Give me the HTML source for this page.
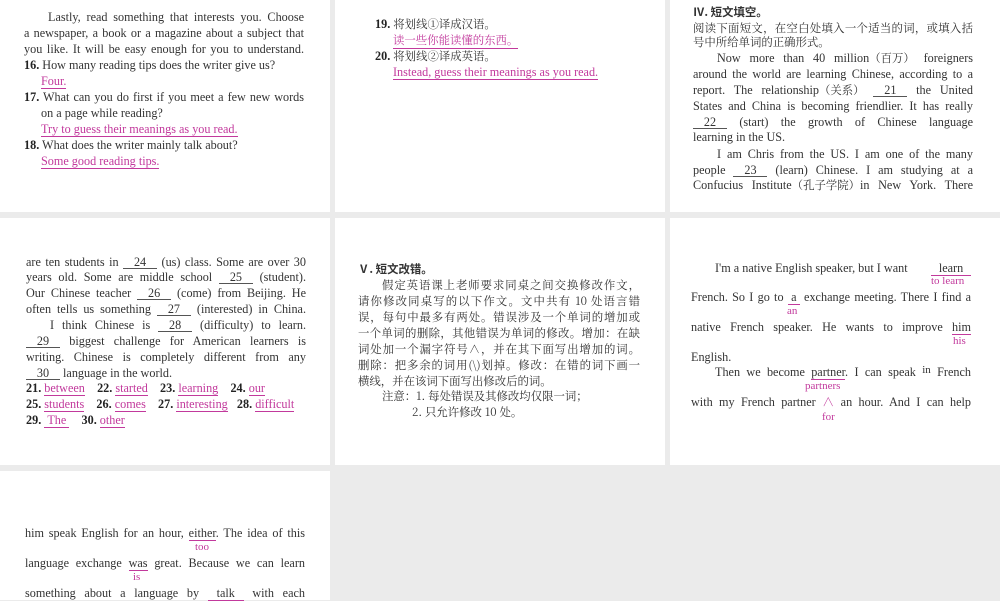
<!DOCTYPE html>
<html><head><meta charset="utf-8">
<style>
*{margin:0;padding:0;box-sizing:border-box}
body{width:1000px;height:600px;background:#ebebeb;position:relative;overflow:hidden;font-family:"Liberation Serif","Noto Serif CJK SC",serif;font-size:12.2px;color:#333}
.p{position:absolute;background:#fff}
.l{position:absolute;white-space:nowrap;line-height:14px;height:14px}
.j{text-align:justify;text-align-last:justify}
.m{color:#c2399c}
.u{border-bottom:1px solid #c2399c}
.b{display:inline-block;border-bottom:1px solid #555;text-align:center;text-align-last:center;line-height:12px}
.c{text-align:center;text-align-last:center}
.k{font-weight:bold;color:#222}
.cn{font-family:"Noto Serif CJK SC",serif;font-size:11.4px}
.ib{display:inline-block}
.h{font-family:"Noto Sans CJK SC",sans-serif;font-weight:bold;font-size:11.4px}
.s{font-size:11px}
</style></head><body>
<div class="p" style="left:0;top:0;width:330px;height:212px"></div>
<div class="p" style="left:335px;top:0;width:330px;height:212px"></div>
<div class="p" style="left:670px;top:0;width:330px;height:212px"></div>
<div class="p" style="left:0;top:218px;width:330px;height:247px"></div>
<div class="p" style="left:335px;top:218px;width:330px;height:247px"></div>
<div class="p" style="left:670px;top:218px;width:330px;height:247px"></div>
<div class="p" style="left:0;top:471px;width:330px;height:129px"></div>

<!-- panel 1 -->
<div class="l j" style="left:48px;top:10px;width:256px">Lastly, read something that interests you. Choose</div>
<div class="l j" style="left:24px;top:26px;width:280px">a newspaper, a book or a magazine about a subject that</div>
<div class="l j" style="left:24px;top:42px;width:280px">you like. It will be easy enough for you to understand.</div>
<div class="l" style="left:24px;top:58px"><span class="k">16.</span> How many reading tips does the writer give us?</div>
<div class="l m" style="left:41px;top:74px"><span class="u">Four.</span></div>
<div class="l j" style="left:24px;top:90px;width:280px"><span class="k">17.</span> What can you do first if you meet a few new words</div>
<div class="l" style="left:41px;top:106px">on a page while reading?</div>
<div class="l m" style="left:41px;top:122px"><span class="u">Try to guess their meanings as you read.</span></div>
<div class="l" style="left:24px;top:138px"><span class="k">18.</span> What does the writer mainly talk about?</div>
<div class="l m" style="left:41px;top:154px"><span class="u">Some good reading tips.</span></div>

<!-- panel 2 -->
<div class="l" style="left:375px;top:17px"><span class="k">19.</span> <span class="cn">将划线①译成汉语。</span></div>
<div class="l m" style="left:393px;top:33px"><span class="u cn">读一些你能读懂的东西。</span></div>
<div class="l" style="left:375px;top:49px"><span class="k">20.</span> <span class="cn">将划线②译成英语。</span></div>
<div class="l m" style="left:393px;top:65px"><span class="u">Instead, guess their meanings as you read.</span></div>

<!-- panel 3 -->
<div class="l h" style="left:693px;top:5px">Ⅳ. 短文填空。</div>
<div class="l j cn" style="left:693px;top:21px;width:280px">阅读下面短文，在空白处填入一个适当的词，或填入括</div>
<div class="l cn" style="left:693px;top:35px">号中所给单词的正确形式。</div>
<div class="l j" style="left:717px;top:51px;width:256px">Now more than 40 million<span class="cn ib">（百万）</span> foreigners</div>
<div class="l j" style="left:693px;top:67px;width:280px">around the world are learning Chinese, according to a</div>
<div class="l j" style="left:693px;top:83px;width:280px">report. The relationship<span class="cn ib">（关系）</span> <span class="b" style="width:34px">21</span> the United</div>
<div class="l j" style="left:693px;top:99px;width:280px">States and China is becoming friendlier. It has really</div>
<div class="l j" style="left:693px;top:115px;width:280px"><span class="b" style="width:34px">22</span> (start) the growth of Chinese language</div>
<div class="l" style="left:693px;top:130px">learning in the US.</div>
<div class="l j" style="left:717px;top:147px;width:256px">I am Chris from the US. I am one of the many</div>
<div class="l j" style="left:693px;top:163px;width:280px">people <span class="b" style="width:34px">23</span> (learn) Chinese. I am studying at a</div>
<div class="l j" style="left:693px;top:178px;width:280px">Confucius Institute<span class="cn ib">（孔子学院）</span>in New York. There</div>

<!-- panel 4 -->
<div class="l j" style="left:26px;top:255px;width:280px">are ten students in <span class="b" style="width:34px">24</span> (us) class. Some are over 30</div>
<div class="l j" style="left:26px;top:270px;width:280px">years old. Some are middle school <span class="b" style="width:34px">25</span> (student).</div>
<div class="l j" style="left:26px;top:286px;width:280px">Our Chinese teacher <span class="b" style="width:34px">26</span> (come) from Beijing. He</div>
<div class="l j" style="left:26px;top:302px;width:280px">often tells us something <span class="b" style="width:34px">27</span> (interested) in China.</div>
<div class="l j" style="left:50px;top:318px;width:256px">I think Chinese is <span class="b" style="width:34px">28</span> (difficulty) to learn.</div>
<div class="l j" style="left:26px;top:334px;width:280px"><span class="b" style="width:34px">29</span> biggest challenge for American learners is</div>
<div class="l j" style="left:26px;top:350px;width:280px">writing. Chinese is completely different from any</div>
<div class="l" style="left:26px;top:366px"><span class="b" style="width:34px">30</span> language in the world.</div>
<div class="l" style="left:26px;top:381px"><span class="k">21.</span> <span class="m u">between</span>&nbsp;&nbsp;&nbsp;&nbsp;<span class="k">22.</span> <span class="m u">started</span>&nbsp;&nbsp;&nbsp;&nbsp;<span class="k">23.</span> <span class="m u">learning</span>&nbsp;&nbsp;&nbsp;&nbsp;<span class="k">24.</span> <span class="m u">our</span></div>
<div class="l" style="left:26px;top:397px"><span class="k">25.</span> <span class="m u">students</span>&nbsp;&nbsp;&nbsp;&nbsp;<span class="k">26.</span> <span class="m u">comes</span>&nbsp;&nbsp;&nbsp;&nbsp;<span class="k">27.</span> <span class="m u">interesting</span>&nbsp;&nbsp;&nbsp;<span class="k">28.</span> <span class="m u">difficult</span></div>
<div class="l" style="left:26px;top:413px"><span class="k">29.</span> <span class="m u">&nbsp;The&nbsp;</span>&nbsp;&nbsp;&nbsp;&nbsp;<span class="k">30.</span> <span class="m u">other</span></div>

<!-- panel 5 -->
<div class="l h" style="left:358px;top:262px">Ⅴ. 短文改错。</div>
<div class="l j cn" style="left:382px;top:278px;width:258px">假定英语课上老师要求同桌之间交换修改作文，</div>
<div class="l j cn" style="left:358px;top:294px;width:282px">请你修改同桌写的以下作文。文中共有 10 处语言错</div>
<div class="l j cn" style="left:358px;top:310px;width:282px">误，每句中最多有两处。错误涉及一个单词的增加或</div>
<div class="l j cn" style="left:358px;top:326px;width:282px">一个单词的删除，其他错误为单词的修改。增加：在缺</div>
<div class="l j cn" style="left:358px;top:342px;width:282px">词处加一个漏字符号∧，并在其下面写出增加的词。</div>
<div class="l j cn" style="left:358px;top:358px;width:282px">删除：把多余的词用(\)划掉。修改：在错的词下画一</div>
<div class="l cn" style="left:358px;top:374px">横线，并在该词下面写出修改后的词。</div>
<div class="l cn" style="left:382px;top:389px">注意：1. 每处错误及其修改均仅限一词；</div>
<div class="l cn" style="left:412px;top:405px">2. 只允许修改 10 处。</div>

<!-- panel 6 -->
<div class="l" style="left:715px;top:261px">I'm a native English speaker, but I want</div>
<div class="l" style="left:931px;top:261px"><span class="c" style="border-bottom:1px solid #c2399c;display:inline-block;width:40px">learn</span></div>
<div class="l m s" style="left:931px;top:274px">to learn</div>
<div class="l j" style="left:691px;top:290px;width:280px">French. So I go to <span class="c" style="border-bottom:1px solid #c2399c;display:inline-block;width:12px">a</span> exchange meeting. There I find a</div>
<div class="l m s" style="left:787px;top:304px">an</div>
<div class="l j" style="left:691px;top:320px;width:280px">native French speaker. He wants to improve <span style="border-bottom:1px solid #c2399c">him</span></div>
<div class="l m s" style="left:953px;top:334px">his</div>
<div class="l" style="left:691px;top:350px">English.</div>
<div class="l j" style="left:715px;top:365px;width:256px">Then we become <span style="border-bottom:1px solid #c2399c">partner</span>. I can speak <span class="s ib" style="position:relative;top:-3px">in</span> French</div>
<div class="l m s" style="left:805px;top:379px">partners</div>
<div class="l j" style="left:691px;top:395px;width:280px">with my French partner <span class="m">∧</span> an hour. And I can help</div>
<div class="l m s" style="left:822px;top:410px">for</div>

<!-- panel 7 -->
<div class="l j" style="left:25px;top:526px;width:280px">him speak English for an hour, <span style="border-bottom:1px solid #c2399c">either</span>. The idea of this</div>
<div class="l m s" style="left:195px;top:540px">too</div>
<div class="l j" style="left:25px;top:556px;width:280px">language exchange <span style="border-bottom:1px solid #c2399c">was</span> great. Because we can learn</div>
<div class="l m s" style="left:133px;top:570px">is</div>
<div class="l j" style="left:25px;top:586px;width:280px">something about a language by <span class="c" style="border-bottom:1px solid #c2399c;display:inline-block;width:36px">talk</span> with each</div>
</body></html>
